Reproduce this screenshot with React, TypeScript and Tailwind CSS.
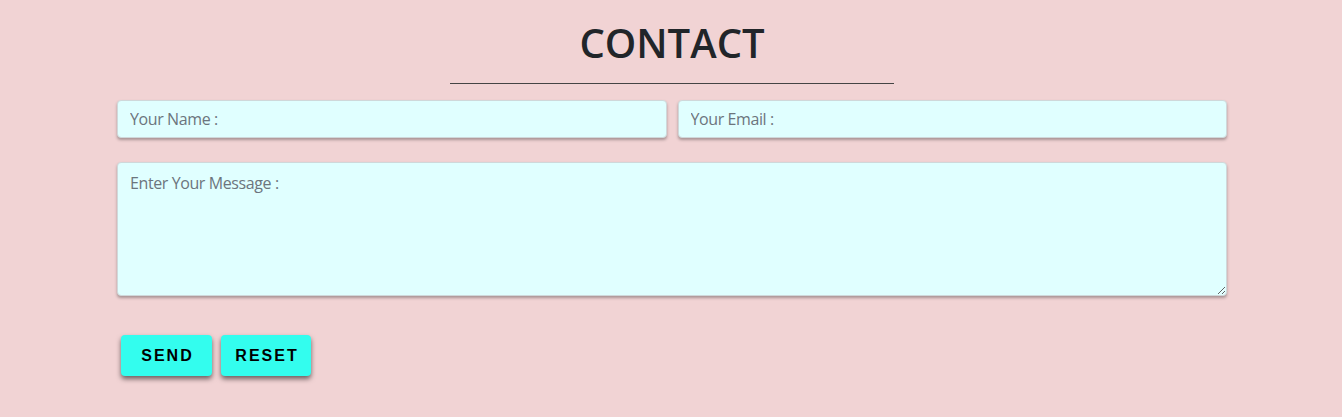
import React from "react";

export default function App() {
  return (
    <div className="min-h-[417px] w-full bg-[#f1d3d4] pl-[2px]" style={{ fontFamily: '"Open Sans", sans-serif' }}>
      <div className="mx-auto w-[1110px] pt-[19px]">
        <h1 className="text-center text-[40px] font-semibold leading-[48px] text-[#212529]" style={{ fontFamily: '"Open Sans", sans-serif' }}>
          CONTACT
        </h1>
        <div className="mx-auto mt-[16px] h-px w-[444px] bg-[#444]" />
        <form className="mt-[16px]" onSubmit={(e) => e.preventDefault()}>
          <div className="grid grid-cols-2 gap-[11px]">
            <input
              type="text"
              placeholder="Your Name :"
              className="h-[38px] rounded-[4px] border border-[#cfd8da] bg-[#e0ffff] px-[12px] text-[16px] tracking-[-0.4px] text-[#495057] shadow-[0_2px_3px_rgba(0,0,0,0.3)] outline-none placeholder:text-[#6c757d]"
            />
            <input
              type="email"
              placeholder="Your Email :"
              className="h-[38px] rounded-[4px] border border-[#cfd8da] bg-[#e0ffff] px-[12px] text-[16px] tracking-[-0.4px] text-[#495057] shadow-[0_2px_3px_rgba(0,0,0,0.3)] outline-none placeholder:text-[#6c757d]"
            />
          </div>
          <textarea
            placeholder="Enter Your Message :"
            className="mt-[24px] block h-[134px] w-full rounded-[4px] border border-[#cfd8da] bg-[#e0ffff] px-[12px] py-[8px] text-[16px] leading-[24px] tracking-[-0.4px] text-[#495057] shadow-[0_2px_3px_rgba(0,0,0,0.3)] outline-none placeholder:text-[#6c757d]"
          />
          <div className="mt-[39px] flex gap-[9px] pl-[4px]">
            <button
              type="submit"
              className="h-[41px] w-[91px] rounded-[4px] bg-[#33fdee] pl-[2px] text-[16px] font-bold tracking-[2px] text-black shadow-[0_3px_5px_rgba(0,0,0,0.55)]"
              style={{ fontFamily: '"Liberation Sans", Arial, sans-serif' }}
            >
              SEND
            </button>
            <button
              type="reset"
              className="h-[41px] w-[90px] rounded-[4px] bg-[#33fdee] pl-[2px] text-[16px] font-bold tracking-[2px] text-black shadow-[0_3px_5px_rgba(0,0,0,0.55)]"
              style={{ fontFamily: '"Liberation Sans", Arial, sans-serif' }}
            >
              RESET
            </button>
          </div>
        </form>
      </div>
    </div>
  );
}
